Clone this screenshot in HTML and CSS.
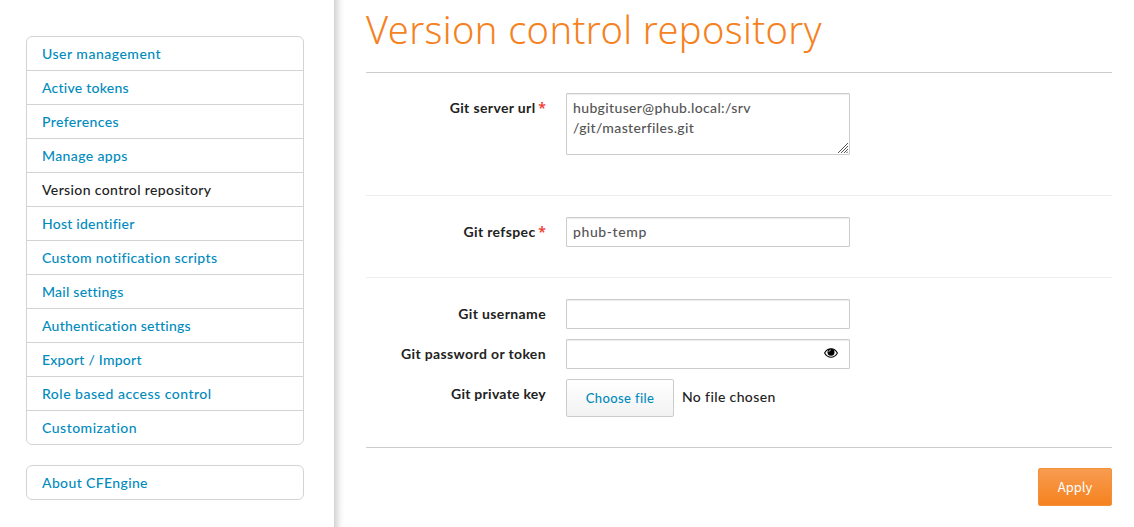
FILE: index.html
```html
<!DOCTYPE html>
<html lang="en">
<head>
<meta charset="utf-8">
<title>Version control repository</title>
<link rel="stylesheet" href="styles.css">
</head>
<body>
<div class="layout">
  <nav class="sidebar">
    <ul class="menu">
      <li class="loose"><a href="#">User management</a></li>
      <li class="tight"><a href="#">Active tokens</a></li>
      <li><a href="#">Preferences</a></li>
      <li><a href="#">Manage apps</a></li>
      <li class="active"><a href="#">Version control repository</a></li>
      <li class="tight"><a href="#">Host identifier</a></li>
      <li><a href="#">Custom notification scripts</a></li>
      <li class="tight"><a href="#">Mail settings</a></li>
      <li class="tight"><a href="#">Authentication settings</a></li>
      <li class="tight"><a href="#">Export / Import</a></li>
      <li class="loose"><a href="#">Role based access control</a></li>
      <li class="loose"><a href="#">Customization</a></li>
    </ul>
    <ul class="menu">
      <li><a href="#">About CFEngine</a></li>
    </ul>
  </nav>
  <main class="content">
    <h1 class="title">Version control repository</h1>
    <form class="form">
      <div class="section section-url">
        <div class="row">
          <label class="label" for="url">Git server url <span class="required">*</span></label>
          <div class="area-wrap">
            <textarea class="field area" id="url" spellcheck="false">hubgituser@phub.local:/srv
/git/masterfiles.git</textarea>
            <svg class="grip" width="10" height="10" viewBox="0 0 10 10">
              <path d="M0 10L10 0M3 10L10 3M6 10L10 6M8.500 10L10 8.500" stroke="#555" stroke-width="1"/>
            </svg>
          </div>
        </div>
      </div>
      <div class="section section-ref">
        <div class="row">
          <label class="label" for="ref">Git refspec <span class="required">*</span></label>
          <input class="field refspec" id="ref" type="text" value="phub-temp">
        </div>
      </div>
      <div class="section section-auth">
        <div class="row">
          <label class="label" for="user">Git username</label>
          <input class="field" id="user" type="text">
        </div>
        <div class="row">
          <label class="label" for="pass">Git password or token</label>
          <div class="field password">
            <input class="bare" id="pass" type="password">
            <svg class="eye" width="14" height="10" viewBox="0 0 14 10">
              <path d="M.6 5C2.2 2.2 4.3.8 7 .8S11.800 2.200 13.400 5C11.800 7.800 9.700 9.200 7 9.200S2.200 7.800.6 5Z" fill="#fff" stroke="#000" stroke-width="1.100"/>
              <circle cx="7" cy="4.200" r="3.500" fill="#000"/>
              <path d="M4.900 4.100C4.900 2.900 5.700 2.100 6.900 2.100" fill="none" stroke="#fff" stroke-width=".7"/>
            </svg>
          </div>
        </div>
        <div class="row">
          <span class="label key">Git private key</span>
          <div class="file">
            <button class="button choose" type="button">Choose file</button>
            <span class="filename">No file chosen</span>
          </div>
        </div>
      </div>
      <div class="actions"><button class="button apply" type="button">Apply</button></div>
    </form>
  </main>
</div>
</body>
</html>
```
FILE: styles.css
```css
* { box-sizing: border-box; }
body {
  margin: 0;
  background: #fff;
  color: #222;
  font: 500 14px/20px Lato, sans-serif;
  letter-spacing: .37px;
  font-variant-ligatures: none;
  overflow: hidden;
}
.layout { display: flex; height: 527px; }
.sidebar {
  flex: 0 0 334px;
  padding: 36px 30px 0 26px;
  display: flex;
  flex-direction: column;
  gap: 20px;
}
.menu {
  margin: 0;
  padding: 0;
  list-style: none;
  border: 1px solid #d3d3d0;
  border-radius: 6px;
}
.menu li { height: 34px; padding: 7px 15px 0; border-bottom: 1px solid #d3d3d0; }
.menu li:last-child { height: 33px; border-bottom: 0; }
.menu a { color: #008bbd; text-decoration: none; }
.menu .active a { color: #222; }
.menu .tight { letter-spacing: .24px; }
.menu .loose { letter-spacing: .5px; }

.content {
  flex: 1;
  padding: 0 22px 0 32px;
  background: linear-gradient(to right, #d5d5d5, #e3e3e3 3px, #f8f8f8 7px, #fff 11px);
}
.title {
  margin: 0;
  height: 73px;
  padding-top: 4px;
  border-bottom: 1px solid #ccc;
  color: #f5821f;
  font-family: "Noto Sans", sans-serif;
  font-size: 38px;
  line-height: 50px;
  font-weight: 300;
  letter-spacing: .4px;
  white-space: nowrap;
}
.section { border-bottom: 1px solid #eee; display: flex; flex-direction: column; gap: 10px; }
.section-url { height: 123px; padding-top: 20px; }
.section-ref { height: 82px; padding-top: 21px; }
.section-auth { height: 170px; padding-top: 21px; border-bottom-color: #ccc; }
.row { display: flex; gap: 20px; align-items: flex-start; }
.label { width: 180px; padding-top: 5px; text-align: right; font-weight: 700; }
.key { letter-spacing: .26px; }
.required { color: #f03a2e; font: 600 14px/18px "Noto Sans", sans-serif; letter-spacing: 0; margin-left: -1px; }
.field {
  display: block;
  width: 284px;
  height: 30px;
  margin: 0;
  padding: 4px 6px;
  border: 1px solid #ccc;
  border-radius: 1px;
  background: #fff;
  box-shadow: inset 0 1px 1px rgba(0, 0, 0, .075);
  color: #555;
  font: inherit;
  letter-spacing: .36px;
  outline: 0;
}
.area-wrap { position: relative; }
.area { height: 62px; overflow: hidden; resize: none; }
.grip { position: absolute; right: 2px; bottom: 2px; }
.refspec { padding: 3px 6px 5px; letter-spacing: .6px; }
.password { display: flex; align-items: center; padding: 3px 11px 5px 6px; }
.bare { flex: 1; min-width: 0; height: 20px; padding: 0; border: 0; background: none; outline: 0; }
.file { display: flex; gap: 8px; }
.filename { padding-top: 8px; }
.button { height: 38px; padding: 0; border-radius: 2px; }
.choose {
  width: 108px;
  border: 1px solid #ccc;
  background: linear-gradient(#fff, #f2f2f2);
  color: #008bbd;
  font: 500 13px/20px Lato, sans-serif;
  letter-spacing: .38px;
}
.actions { display: flex; justify-content: flex-end; padding-top: 20px; }
.apply {
  width: 74px;
  border: 1px solid #f5903a;
  background: linear-gradient(#f89c50, #f5821f);
  color: #fff;
  font: 400 13px/20px "Noto Sans CJK SC", sans-serif;
}
```
